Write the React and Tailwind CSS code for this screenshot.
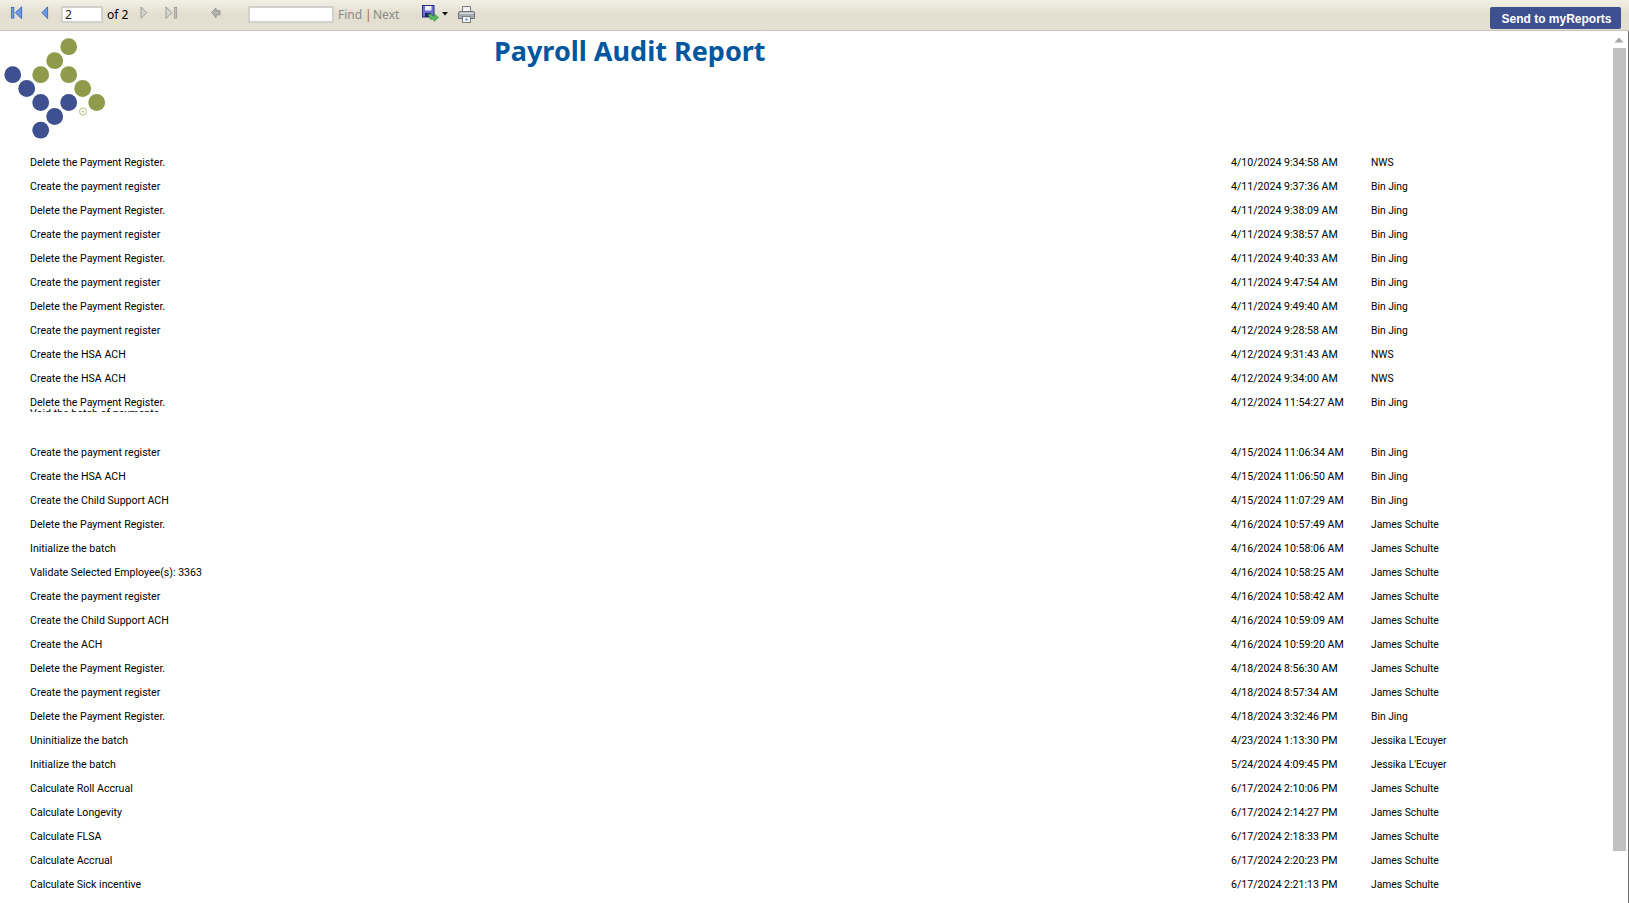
const rows1 = [
  ["Delete the Payment Register.", "4/10/2024 9:34:58 AM", "NWS"],
  ["Create the payment register", "4/11/2024 9:37:36 AM", "Bin Jing"],
  ["Delete the Payment Register.", "4/11/2024 9:38:09 AM", "Bin Jing"],
  ["Create the payment register", "4/11/2024 9:38:57 AM", "Bin Jing"],
  ["Delete the Payment Register.", "4/11/2024 9:40:33 AM", "Bin Jing"],
  ["Create the payment register", "4/11/2024 9:47:54 AM", "Bin Jing"],
  ["Delete the Payment Register.", "4/11/2024 9:49:40 AM", "Bin Jing"],
  ["Create the payment register", "4/12/2024 9:28:58 AM", "Bin Jing"],
  ["Create the HSA ACH", "4/12/2024 9:31:43 AM", "NWS"],
  ["Create the HSA ACH", "4/12/2024 9:34:00 AM", "NWS"],
];
const rows2 = [
  ["Create the payment register", "4/15/2024 11:06:34 AM", "Bin Jing"],
  ["Create the HSA ACH", "4/15/2024 11:06:50 AM", "Bin Jing"],
  ["Create the Child Support ACH", "4/15/2024 11:07:29 AM", "Bin Jing"],
  ["Delete the Payment Register.", "4/16/2024 10:57:49 AM", "James Schulte"],
  ["Initialize the batch", "4/16/2024 10:58:06 AM", "James Schulte"],
  ["Validate Selected Employee(s): 3363", "4/16/2024 10:58:25 AM", "James Schulte"],
  ["Create the payment register", "4/16/2024 10:58:42 AM", "James Schulte"],
  ["Create the Child Support ACH", "4/16/2024 10:59:09 AM", "James Schulte"],
  ["Create the ACH", "4/16/2024 10:59:20 AM", "James Schulte"],
  ["Delete the Payment Register.", "4/18/2024 8:56:30 AM", "James Schulte"],
  ["Create the payment register", "4/18/2024 8:57:34 AM", "James Schulte"],
  ["Delete the Payment Register.", "4/18/2024 3:32:46 PM", "Bin Jing"],
  ["Uninitialize the batch", "4/23/2024 1:13:30 PM", "Jessika L'Ecuyer"],
  ["Initialize the batch", "5/24/2024 4:09:45 PM", "Jessika L'Ecuyer"],
  ["Calculate Roll Accrual", "6/17/2024 2:10:06 PM", "James Schulte"],
  ["Calculate Longevity", "6/17/2024 2:14:27 PM", "James Schulte"],
  ["Calculate FLSA", "6/17/2024 2:18:33 PM", "James Schulte"],
  ["Calculate Accrual", "6/17/2024 2:20:23 PM", "James Schulte"],
  ["Calculate Sick incentive", "6/17/2024 2:21:13 PM", "James Schulte"],
];

function Row({ r }) {
  return (
    <div className="flex h-[24px] items-center font-['Roboto',sans-serif] text-[10.6px] leading-[14px] text-black">
      <div className="w-[1201px]">{r[0]}</div>
      <div className="w-[140px]">{r[1]}</div>
      <div className="text-[10.3px]">{r[2]}</div>
    </div>
  );
}

function ClippedRow() {
  return (
    <div className="flex h-[24px] items-center font-['Roboto',sans-serif] text-[10.6px] leading-[14px] text-black">
      <div className="mt-[5px] h-[16px] w-[1201px] self-start overflow-hidden">
        <div>Delete the Payment Register.</div>
        <div className="-mt-[3px]">Void the batch of payments</div>
      </div>
      <div className="w-[140px]">4/12/2024 11:54:27 AM</div>
      <div className="text-[10.3px]">Bin Jing</div>
    </div>
  );
}

function Logo() {
  const olive = [[68.7,46.7],[54.7,60.7],[40.7,74.7],[68.7,74.7],[82.7,88.5],[96.7,102.5]];
  const blue = [[12.7,74.7],[26.7,88.5],[40.7,102.5],[68.7,102.5],[54.7,116.5],[40.7,130.2]];
  return (
    <svg width="110" height="110" viewBox="0 31 110 110" className="block">
      {olive.map(([x,y],i)=><circle key={i} cx={x} cy={y} r="8.4" fill="#8f9a4b"/>)}
      {blue.map(([x,y],i)=><circle key={i} cx={x} cy={y} r="8.4" fill="#3f5090"/>)}
      <circle cx="83" cy="111.5" r="3.3" fill="none" stroke="#c9cea0" strokeWidth="1.2"/>
      <circle cx="83" cy="111.5" r="1.2" fill="#c9cea0"/>
    </svg>
  );
}

function First(){return <svg width="13" height="14" viewBox="0 0 13 14"><rect x="1.3" y="1.3" width="2.6" height="10.8" fill="#6f9ae8" stroke="#2a5ab8" strokeWidth=".7"/><path d="M11.6 .8 L5.3 6.7 L11.6 12.6Z" fill="#6f9ae8" stroke="#2a5ab8" strokeWidth=".8"/></svg>}
function Prev(){return <svg width="8" height="14" viewBox="0 0 8 14"><path d="M6.6 .8 L1 6.7 L6.6 12.6Z" fill="#6f9ae8" stroke="#2a5ab8" strokeWidth=".8"/></svg>}
function Next(){return <svg width="8" height="14" viewBox="0 0 8 14"><path d="M1 1 L6.6 6.7 L1 12.4Z" fill="#d6d6ce" stroke="#8e8e8e" strokeWidth=".8"/></svg>}
function Last(){return <svg width="13" height="14" viewBox="0 0 13 14"><path d="M1 1 L7 6.7 L1 12.4Z" fill="#d6d6ce" stroke="#8e8e8e" strokeWidth=".8"/><rect x="9.3" y="1.3" width="2.4" height="10.8" fill="#c4c4be" stroke="#8e8e8e" strokeWidth=".7"/></svg>}
function Back(){return <svg width="10" height="12" viewBox="0 0 10 12"><path d="M5 .8 L.8 5.5 L5 10.8 V7.8 H9 V3.6 H5Z" fill="#b4b4b0" stroke="#8a8a88" strokeWidth=".8"/></svg>}
function Save(){return <svg width="17" height="17" viewBox="0 0 17 17"><rect x=".5" y=".5" width="11.5" height="11.5" fill="#6a70d4" stroke="#2a2f80"/><rect x="3" y="1" width="6.5" height="4.5" fill="#f0f0f8"/><rect x="3" y="8" width="6" height="4" fill="#20246a"/><path d="M6 9.5 L10 9 L10 11 H12 V8.5 L16.5 12.5 L12 16.5 V14.3 H8.5Z" fill="#57b85c" stroke="#2f8a3a" strokeWidth=".6"/></svg>}
function Caret(){return <svg width="6" height="4" viewBox="0 0 6 4"><path d="M0 0H6L3 3.5Z" fill="#111"/></svg>}
function Printer(){return <svg width="17" height="17" viewBox="0 0 17 17"><path d="M4.5 .5H12.5V6H4.5Z" fill="#f4f4f4" stroke="#7c7c80"/><path d="M1.5 5.5H15.5Q16.5 5.5 16.5 7V12.5H.5V7Q.5 5.5 1.5 5.5Z" fill="#a8acb0" stroke="#70747a"/><rect x="1.5" y="6.5" width="14" height="1.5" fill="#d8dadc"/><rect x="4.5" y="10.5" width="8" height="6" fill="#f4f6f8" stroke="#7c7c80"/><rect x="7.5" y="12.5" width="2" height="2" fill="#4a90c8"/></svg>}

export default function App() {
  return (
    <div className="flex h-[903px] w-[1629px] flex-col overflow-hidden bg-white font-['Noto_Sans',sans-serif]">
      <div className="flex h-[31px] shrink-0 items-start border-b border-[#c6c4bc] bg-gradient-to-b from-[#f2efe5] via-[#e2dfd0] to-[#e4e1d3]">
        <div className="ml-[10px] mt-[6px] flex"><First/></div>
        <div className="ml-[18px] mt-[6px] flex"><Prev/></div>
        <div className="ml-[12px] mt-[6px] flex h-[17px] w-[42px] items-center border-2 border-[#d2d2cc] bg-white pl-[2px] text-[12px] text-[#222]">2</div>
        <span className="ml-[4px] mt-[6px] w-[33px] text-[12px] leading-[18px] text-black">of 2</span>
        <div className="mt-[6px] flex"><Next/></div>
        <div className="ml-[17px] mt-[6px] flex"><Last/></div>
        <div className="ml-[33px] mt-[7px] flex"><Back/></div>
        <div className="ml-[27px] mt-[6px] h-[17px] w-[86px] border-2 border-[#d2d2cc] bg-white"></div>
        <span className="ml-[4px] mt-[6px] w-[27px] text-[12px] leading-[18px] text-[#8a8a88]">Find</span>
        <span className="mt-[6px] w-[8px] text-[12px] leading-[18px] text-[#a86a20]">|</span>
        <span className="mt-[6px] w-[49px] text-[12px] leading-[18px] text-[#8a8a88]">Next</span>
        <div className="mt-[5px] flex"><Save/></div>
        <div className="ml-[3px] mt-[12px] flex"><Caret/></div>
        <div className="ml-[10px] mt-[6px] flex"><Printer/></div>
        <div className="ml-auto mr-[8px] mt-[7px] flex h-[22px] w-[131px] items-center justify-center rounded-[2px] bg-[#3f5090] pl-[2px] pt-[1px] font-['Liberation_Sans',sans-serif] text-[12px] font-bold text-white">Send to myReports</div>
      </div>
      <div className="flex min-h-0 flex-1">
        <div className="min-w-0 flex-1">
          <div className="flex h-[120px]">
            <div className="w-[494px] shrink-0"><Logo/></div>
            <div className="text-[27px] font-bold leading-[40px] text-[#00579d]">Payroll Audit Report</div>
          </div>
          <div className="pl-[30px]">
            {rows1.map((r,i)=><Row key={i} r={r}/>)}
            <ClippedRow/>
            <div className="h-[26px]"></div>
            {rows2.map((r,i)=><Row key={i} r={r}/>)}
          </div>
        </div>
        <div className="flex w-[18px] shrink-0 flex-col items-start pl-[3px]">
          <svg width="10" height="6" viewBox="0 0 10 6" className="ml-[1px] mt-[6px]"><path d="M5 .5L9.5 5.5H.5Z" fill="#a6a6a6"/></svg>
          <div className="mt-[5px] h-[803px] w-[13px] bg-[#c0c0c0]"></div>
        </div>
        <div className="w-[1px] shrink-0 bg-[#6e6e6e]"></div>
      </div>
    </div>
  );
}
